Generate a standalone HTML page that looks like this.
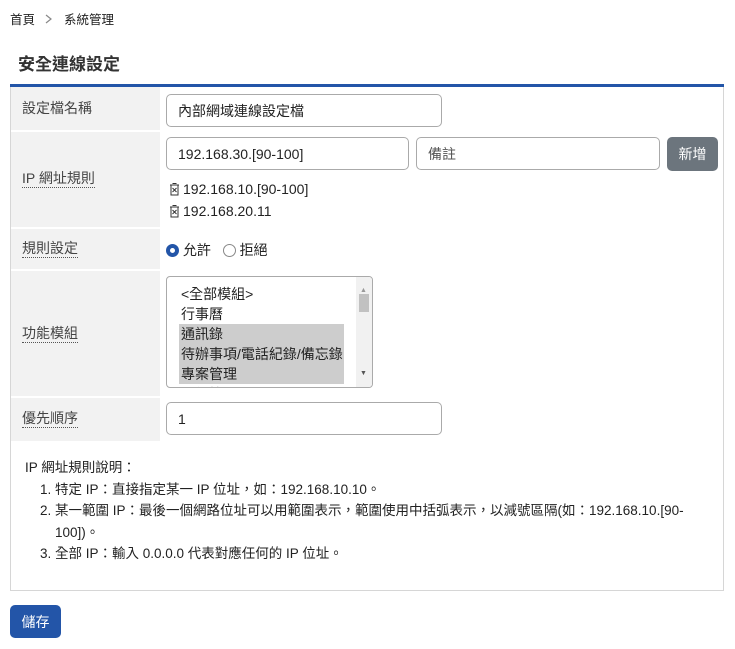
<!DOCTYPE html>
<html><head><meta charset="utf-8"><style>
*{box-sizing:border-box}
body{margin:0;width:735px;height:649px;background:#fff;font-family:"Liberation Sans","Noto Sans CJK TC",sans-serif;font-size:14px;color:#222;position:relative}
.a{position:absolute}
.bc{left:10px;top:9px;font-size:12.5px}
.title{left:18px;top:50px;font-size:17px;font-weight:bold;color:#333}
.blue{left:10px;top:84px;width:714px;height:3px;background:#2355a8}
.box{left:10px;top:87px;width:714px;height:504px;border:1px solid #d6d6d6;border-top:none}
.lab{left:11px;width:149px;background:#f2f2f2;color:#444}
.lab span{position:absolute;left:11px;border-bottom:1px dotted #555;line-height:17px}
.inp{border:1px solid #aaa;border-radius:5px;background:#fff;padding-left:11px;display:flex;align-items:center;height:33px}
.btn{border-radius:5px;color:#fff;display:flex;align-items:center;justify-content:center}
ol{margin:0;padding-left:30px}
li{white-space:nowrap}
.tr{display:inline-block;vertical-align:-2px;margin-right:3px}
</style></head><body>
<div class="a bc">首頁 <svg width="22" height="12" style="vertical-align:-1px"><path d="M8 2l5 4-5 4" fill="none" stroke="#888" stroke-width="1.2"/></svg> 系統管理</div>
<div class="a title">安全連線設定</div>
<div class="a blue"></div>
<div class="a box"></div>
<div class="a lab" style="top:87px;height:43px"><span style="top:13px;border:none">設定檔名稱</span></div>
<div class="a lab" style="top:132px;height:95px"><span style="top:38px">IP 網址規則</span></div>
<div class="a lab" style="top:229px;height:40px"><span style="top:11px">規則設定</span></div>
<div class="a lab" style="top:271px;height:125px"><span style="top:54px">功能模組</span></div>
<div class="a lab" style="top:398px;height:43px"><span style="top:12px">優先順序</span></div>
<div class="a inp" style="left:166px;top:94px;width:276px">內部網域連線設定檔</div>
<div class="a inp" style="left:166px;top:137px;width:243px">192.168.30.[90-100]</div>
<div class="a inp" style="left:416px;top:137px;width:244px;color:#555">備註</div>
<div class="a btn" style="left:667px;top:137px;width:51px;height:34px;background:#6c757d">新增</div>
<div class="a" style="left:169px;top:178px;line-height:22px">
<div><svg class="tr" width="11" height="14"><path d="M3.5 1.5h4M1 3h9M2 3v10h7V3M3.5 6l4 4M7.5 6l-4 4" fill="none" stroke="#333" stroke-width="1"/></svg>192.168.10.[90-100]</div>
<div><svg class="tr" width="11" height="14"><path d="M3.5 1.5h4M1 3h9M2 3v10h7V3M3.5 6l4 4M7.5 6l-4 4" fill="none" stroke="#333" stroke-width="1"/></svg>192.168.20.11</div></div>
<div class="a" style="left:166px;top:240px;display:flex;align-items:center">
<span style="width:13px;height:13px;border-radius:50%;border:4px solid #2355a8;display:inline-block"></span>&nbsp;允許&nbsp;&nbsp;&nbsp;
<span style="width:13px;height:13px;border-radius:50%;border:1px solid #888;display:inline-block"></span>&nbsp;拒絕</div>
<div class="a" style="left:166px;top:276px;width:207px;height:112px;border:1px solid #aaa;border-radius:4px;overflow:hidden;line-height:20px">
<div style="position:absolute;left:12px;top:7px;width:165px">
<div style="padding-left:2px">&lt;全部模組&gt;</div><div style="padding-left:2px">行事曆</div>
<div style="background:#cdcdcd;padding-left:2px">通訊錄</div><div style="background:#cdcdcd;padding-left:2px">待辦事項/電話紀錄/備忘錄</div><div style="background:#cdcdcd;padding-left:2px">專案管理</div><div style="padding-left:2px">郵件管理</div></div>
<div style="position:absolute;right:0;top:0;width:16px;height:110px;background:#f1f1f1"><div style="position:absolute;left:3px;top:17px;width:10px;height:18px;background:#c1c1c1"></div><div style="position:absolute;left:4px;top:4px;font-size:7px;color:#999">▲</div><div style="position:absolute;left:4px;bottom:3px;font-size:7px;color:#555">▼</div></div>
</div>
<div class="a inp" style="left:166px;top:402px;width:276px">1</div>
<div class="a" style="left:25px;top:457px;width:690px;font-size:13.5px;line-height:21.5px">IP 網址規則說明：
<ol><li>特定 IP：直接指定某一 IP 位址，如：192.168.10.10。</li>
<li>某一範圍 IP：最後一個網路位址可以用範圍表示，範圍使用中括弧表示，以減號區隔(如：192.168.10.[90-<br>100])。</li>
<li>全部 IP：輸入 0.0.0.0 代表對應任何的 IP 位址。</li></ol></div>
<div class="a btn" style="left:10px;top:605px;width:51px;height:33px;background:#2355a8">儲存</div>
</body></html>
